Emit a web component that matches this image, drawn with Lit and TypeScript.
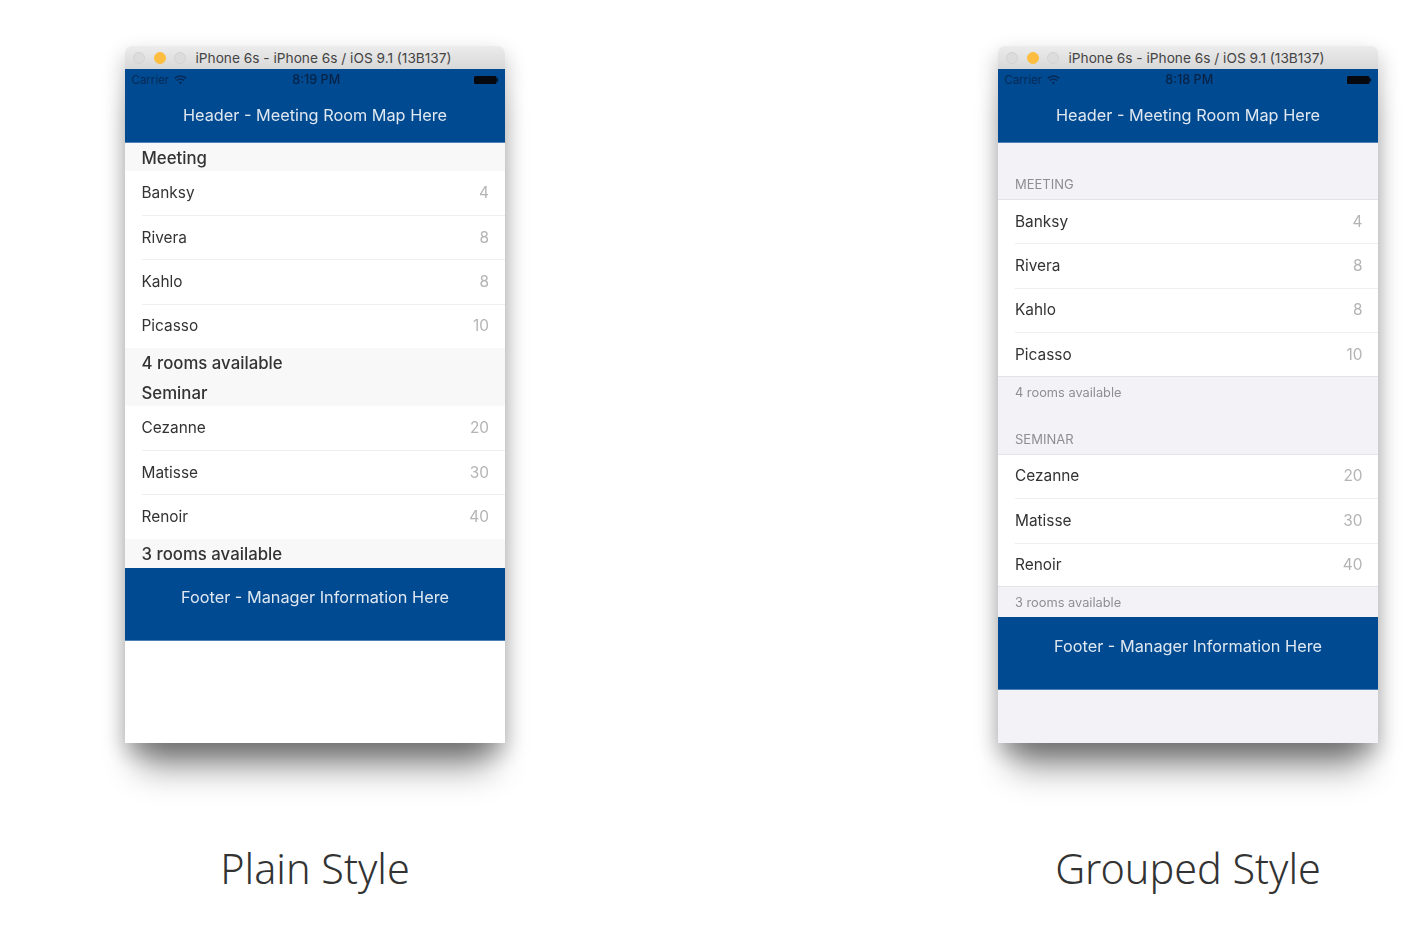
import { LitElement, html, css } from 'lit';
import { customElement, property } from 'lit/decorators.js';

type Room = { name: string; seats: number };
type Section = { title: string; footer: string; rooms: Room[] };

const SECTIONS: Section[] = [
  {
    title: 'Meeting',
    footer: '4 rooms available',
    rooms: [
      { name: 'Banksy', seats: 4 },
      { name: 'Rivera', seats: 8 },
      { name: 'Kahlo', seats: 8 },
      { name: 'Picasso', seats: 10 },
    ],
  },
  {
    title: 'Seminar',
    footer: '3 rooms available',
    rooms: [
      { name: 'Cezanne', seats: 20 },
      { name: 'Matisse', seats: 30 },
      { name: 'Renoir', seats: 40 },
    ],
  },
];

@customElement('sim-window')
export class SimWindow extends LitElement {
  static override styles = css`
    :host {
      display: flex;
      flex-direction: column;
      width: 380px;
      height: 697px;
      font-family: Inter, 'Liberation Sans', sans-serif;
      background: #fff;
      border-radius: 7px 7px 0 0;
      box-shadow: 0 38px 32px -14px rgba(0, 0, 0, 0.42), 0 10px 22px rgba(0, 0, 0, 0.28);
      overflow: hidden;
    }
    :host([grouped]) {
      background: #f3f3f7;
    }
    .titlebar {
      flex: none;
      height: 23px;
      display: flex;
      align-items: center;
      padding-left: 8px;
      background: linear-gradient(#ececec, #d8d8d8);
      color: #444;
      font-size: 13.7px;
    }
    .dot {
      width: 12px;
      height: 12px;
      border-radius: 50%;
      background: #dcdcdc;
      border: 1px solid #d2d2d2;
      box-sizing: border-box;
      margin-right: 8.5px;
    }
    .dot.yellow {
      background: #fdbd41;
      border-color: #fdbd41;
    }
    .device-title {
      margin-left: 1px;
      white-space: nowrap;
    }
    .bar {
      flex: none;
      height: 73.5px;
      box-sizing: border-box;
      background: #004a91;
      color: #dfe8f1;
      font-size: 16.3px;
      text-align: center;
      border-bottom: 1px solid #4d80b6;
    }
    .status {
      height: 21px;
      display: grid;
      grid-template-columns: 1fr auto 1fr;
      align-items: center;
      padding: 0 7px 0 6.5px;
      font-size: 11.5px;
      color: #072a57;
    }
    .carrier {
      display: flex;
      align-items: center;
      gap: 5px;
    }
    .carrier svg {
      display: block;
    }
    .clock {
      color: #072448;
      font-size: 12.6px;
      font-weight: 500;
      margin-left: 3px;
    }
    .battery {
      justify-self: end;
      display: block;
    }
    .caption {
      padding-top: 15px;
      line-height: 20px;
    }
    .foot-bar {
      height: 73px;
    }
    .foot-bar .caption {
      padding-top: 19px;
    }
    .head,
    .foot {
      height: 28px;
      line-height: 30px;
      padding-left: 16.5px;
      background: #f8f8f8;
      color: #333;
      font-size: 16.8px;
      font-weight: 500;
    }
    .foot {
      height: 29.5px;
    }
    .list {
      background: #fff;
    }
    .row {
      height: 44.4px;
      box-sizing: border-box;
      display: flex;
      align-items: center;
      justify-content: space-between;
      padding: 0 16px 0 16.5px;
      color: #333;
      font-size: 15.4px;
      position: relative;
    }
    .row + .row::before {
      content: '';
      position: absolute;
      left: 17px;
      right: 0;
      top: 0;
      height: 1px;
      background: #eeeeee;
    }
    .seats {
      color: #b4b4b4;
    }

    :host([grouped]) .row {
      padding: 0 15.5px 0 17px;
    }
    :host([grouped]) .head {
      height: 47px;
      padding: 22px 0 0 17px;
      box-sizing: border-box;
      line-height: 20px;
      background: none;
      color: #8e8e93;
      font-size: 13px;
      font-weight: 400;
      text-transform: uppercase;
    }
    :host([grouped]) .bar + .section .head {
      height: 56.5px;
      padding-top: 31.5px;
    }
    :host([grouped]) .list {
      box-shadow: inset 0 1px #e4e4e8, inset 0 -1px #e4e4e8;
    }
    :host([grouped]) .foot {
      height: 30.2px;
      line-height: 32px;
      padding-left: 17px;
      background: none;
      color: #8e8e93;
      font-size: 12.8px;
      font-weight: 400;
    }
  `;

  @property({ type: String }) time = '';
  @property({ type: Boolean, reflect: true }) grouped = false;

  private renderSection(section: Section) {
    return html`
      <div class="section">
        <div class="head">${section.title}</div>
        <div class="list">
          ${section.rooms.map(
            (room) => html`
              <div class="row">
                <span>${room.name}</span>
                <span class="seats">${room.seats}</span>
              </div>
            `
          )}
        </div>
        <div class="foot">${section.footer}</div>
      </div>
    `;
  }

  override render() {
    return html`
      <div class="titlebar">
        <span class="dot"></span>
        <span class="dot yellow"></span>
        <span class="dot"></span>
        <span class="device-title">iPhone 6s - iPhone 6s / iOS 9.1 (13B137)</span>
      </div>
      <div class="bar">
        <div class="status">
          <span class="carrier">
            Carrier
            <svg width="13" height="10" viewBox="0 0 13 10" fill="none" stroke="#072a57" stroke-width="1.6">
              <path d="M.8 3.4a8 8 0 0 1 11.4 0" />
              <path d="M3 5.6a5 5 0 0 1 7 0" />
              <path d="M6.5 9.6 4.8 7.6a2.4 2.4 0 0 1 3.4 0z" fill="#072a57" stroke="none" />
            </svg>
          </span>
          <span class="clock">${this.time}</span>
          <svg class="battery" width="24" height="8" viewBox="0 0 24 8">
            <rect width="22.5" height="8" rx="1.5" fill="#05080f" />
            <rect x="22.5" y="2.5" width="1.5" height="3" fill="#05080f" />
          </svg>
        </div>
        <div class="caption">Header - Meeting Room Map Here</div>
      </div>
      ${SECTIONS.map((section) => this.renderSection(section))}
      <div class="bar foot-bar"><div class="caption">Footer - Manager Information Here</div></div>
    `;
  }
}

@customElement('app-root')
export class AppRoot extends LitElement {
  static override styles = css`
    :host {
      display: block;
      height: 930px;
      background: #fff;
      overflow: hidden;
    }
    .page {
      display: flex;
      gap: 493px;
      padding: 46px 0 0 125px;
    }
    .column {
      display: flex;
      flex-direction: column;
      align-items: center;
      width: 380px;
    }
    .style-name {
      margin-top: 98px;
      font-family: 'Noto Sans', 'Open Sans', sans-serif;
      font-weight: 300;
      font-size: 41.3px;
      line-height: 54px;
      color: #333;
    }
    sim-window {
      filter: blur(0.35px);
    }
  `;

  override render() {
    return html`
      <div class="page">
        <div class="column">
          <sim-window time="8:19 PM"></sim-window>
          <div class="style-name">Plain Style</div>
        </div>
        <div class="column">
          <sim-window grouped time="8:18 PM"></sim-window>
          <div class="style-name">Grouped Style</div>
        </div>
      </div>
    `;
  }
}

declare global {
  interface HTMLElementTagNameMap {
    'app-root': AppRoot;
    'sim-window': SimWindow;
  }
}
